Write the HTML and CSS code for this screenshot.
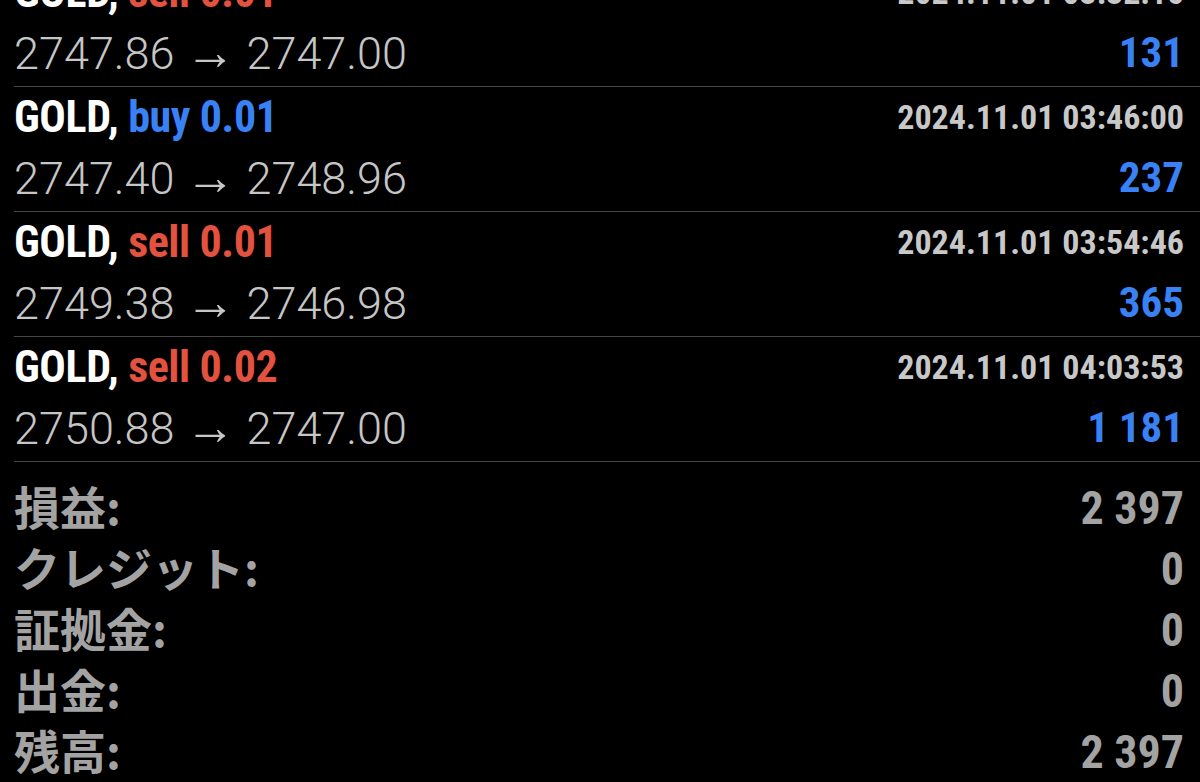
FILE: index.html
```html
<!DOCTYPE html>
<html lang="ja">
<head>
<meta charset="utf-8">
<title>History</title>
<link rel="stylesheet" href="styles.css">
</head>
<body>
<div class="screen">
  <ul class="deals">
    <li class="deal">
      <div class="line">
        <span class="title">GOLD, <span class="sell">sell 0.01</span></span>
        <span class="date">2024.11.01 03:32:16</span>
      </div>
      <div class="line">
        <span class="price">2747.86 <span class="arrow">→</span> 2747.00</span>
        <span class="profit">131</span>
      </div>
    </li>
    <li class="deal">
      <div class="line">
        <span class="title">GOLD, <span class="buy">buy 0.01</span></span>
        <span class="date">2024.11.01 03:46:00</span>
      </div>
      <div class="line">
        <span class="price">2747.40 <span class="arrow">→</span> 2748.96</span>
        <span class="profit">237</span>
      </div>
    </li>
    <li class="deal">
      <div class="line">
        <span class="title">GOLD, <span class="sell">sell 0.01</span></span>
        <span class="date">2024.11.01 03:54:46</span>
      </div>
      <div class="line">
        <span class="price">2749.38 <span class="arrow">→</span> 2746.98</span>
        <span class="profit">365</span>
      </div>
    </li>
    <li class="deal">
      <div class="line">
        <span class="title">GOLD, <span class="sell">sell 0.02</span></span>
        <span class="date">2024.11.01 04:03:53</span>
      </div>
      <div class="line">
        <span class="price">2750.88 <span class="arrow">→</span> 2747.00</span>
        <span class="profit">1 181</span>
      </div>
    </li>
  </ul>
  <dl class="summary">
    <div class="sum-row"><dt>損益:</dt><dd>2 397</dd></div>
    <div class="sum-row"><dt>クレジット:</dt><dd>0</dd></div>
    <div class="sum-row"><dt>証拠金:</dt><dd>0</dd></div>
    <div class="sum-row"><dt>出金:</dt><dd>0</dd></div>
    <div class="sum-row"><dt>残高:</dt><dd>2 397</dd></div>
  </dl>
</div>
</body>
</html>
```

FILE: styles.css
```css
html, body {
  margin: 0;
  padding: 0;
  background: #000;
}

body {
  width: 1200px;
  height: 782px;
  overflow: hidden;
}

.screen {
  padding-left: 14px;
}

.deals {
  list-style: none;
  margin: -38px 0 0 0;
  padding: 0;
}

.deal {
  padding: 0 16px 4px 0;
  border-bottom: 1px solid #464646;
}

.line {
  display: flex;
  justify-content: space-between;
  align-items: flex-start;
  height: 60px;
  white-space: nowrap;
}

.title,
.date,
.profit,
.sum-row dd {
  font-family: Roboto, "Noto Sans", sans-serif;
  font-stretch: 75%;
  font-weight: 700;
}

.title {
  font-size: 44px;
  letter-spacing: -0.4px;
  line-height: 60px;
  color: #fff;
}

.sell { color: #e2523e; }
.buy { color: #3882f5; }

.date {
  font-size: 34px;
  line-height: 60px;
  color: #c8c8c8;
}

.price {
  font-family: Roboto, "Liberation Sans", sans-serif;
  font-weight: 300;
  font-stretch: 100%;
  font-size: 45px;
  line-height: 60px;
  color: #c6c6c6;
}

.arrow {
  font-family: "Liberation Sans", sans-serif;
  font-weight: 400;
  font-size: 50px;
  vertical-align: 0;
}

.profit {
  font-size: 43px;
  line-height: 60px;
  color: #3882f5;
}

.summary {
  margin: 0;
  padding: 16px 16px 0 0;
}

.sum-row {
  display: flex;
  justify-content: space-between;
  height: 61px;
}

.sum-row dt {
  font-family: "Noto Sans CJK JP", sans-serif;
  font-weight: 700;
  font-size: 46px;
  line-height: 61px;
  color: #a3a3a3;
  margin-top: -3px;
}

.sum-row dd {
  margin: 0;
  font-size: 46px;
  line-height: 61px;
  color: #a3a3a3;
}
```
